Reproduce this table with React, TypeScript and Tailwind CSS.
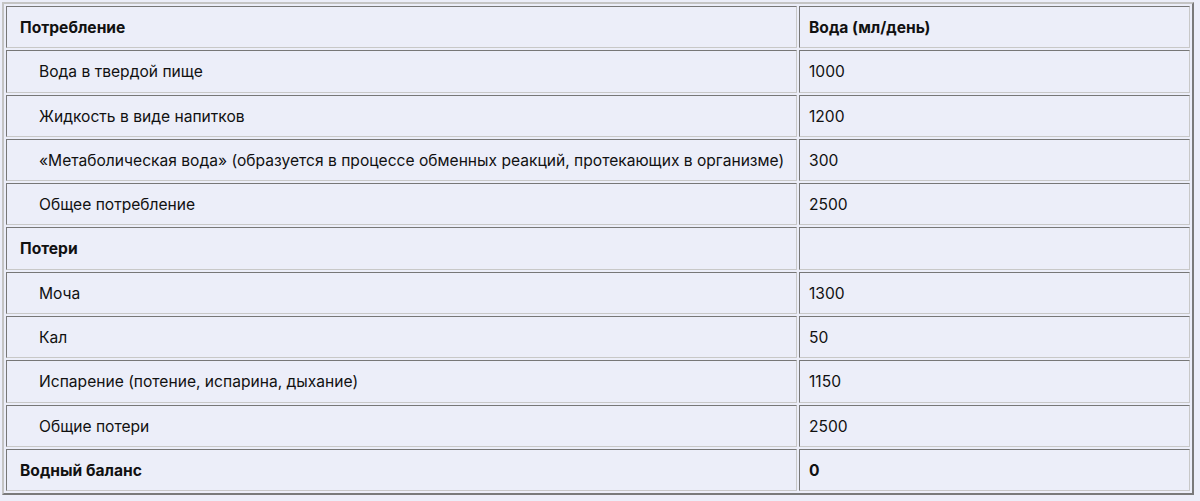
const rows: { label: string; value: string; kind: "head" | "item" }[] = [
  { label: "Потребление", value: "Вода (мл/день)", kind: "head" },
  { label: "Вода в твердой пище", value: "1000", kind: "item" },
  { label: "Жидкость в виде напитков", value: "1200", kind: "item" },
  {
    label:
      "«Метаболическая вода» (образуется в процессе обменных реакций, протекающих в организме)",
    value: "300",
    kind: "item",
  },
  { label: "Общее потребление", value: "2500", kind: "item" },
  { label: "Потери", value: "", kind: "head" },
  { label: "Моча", value: "1300", kind: "item" },
  { label: "Кал", value: "50", kind: "item" },
  { label: "Испарение (потение, испарина, дыхание)", value: "1150", kind: "item" },
  { label: "Общие потери", value: "2500", kind: "item" },
  { label: "Водный баланс", value: "0", kind: "head" },
];

export default function App() {
  return (
    <div className="min-h-[501px] w-[1200px] bg-[#eceef9] pl-[2px] pt-[2px] font-['Inter',sans-serif] text-[15.6px] text-[#111]">
      <table className="w-[1192px] border-separate border-spacing-[2px] border-2 border-t-[#c4c4c4] border-l-[#c4c4c4] border-r-[#7a7a7a] border-b-[#7a7a7a]">
        <tbody>
          {rows.map((r, i) => (
            <tr key={i}>
              <td
                className={`w-[791px] border border-t-[#777] border-l-[#777] border-r-[#c8c8c8] border-b-[#c8c8c8] pt-[13px] pb-[11px] leading-[16.3px] ${
                  r.kind === "head" ? "pl-[13px] font-bold" : "pl-[32px]"
                }`}
              >
                {r.label}
              </td>
              <td
                className={`border border-t-[#777] border-l-[#777] border-r-[#c8c8c8] border-b-[#c8c8c8] pt-[13px] pb-[11px] pl-[9px] leading-[16.3px] ${
                  r.kind === "head" ? "font-bold" : ""
                }`}
              >
                {r.value}
              </td>
            </tr>
          ))}
        </tbody>
      </table>
    </div>
  );
}
